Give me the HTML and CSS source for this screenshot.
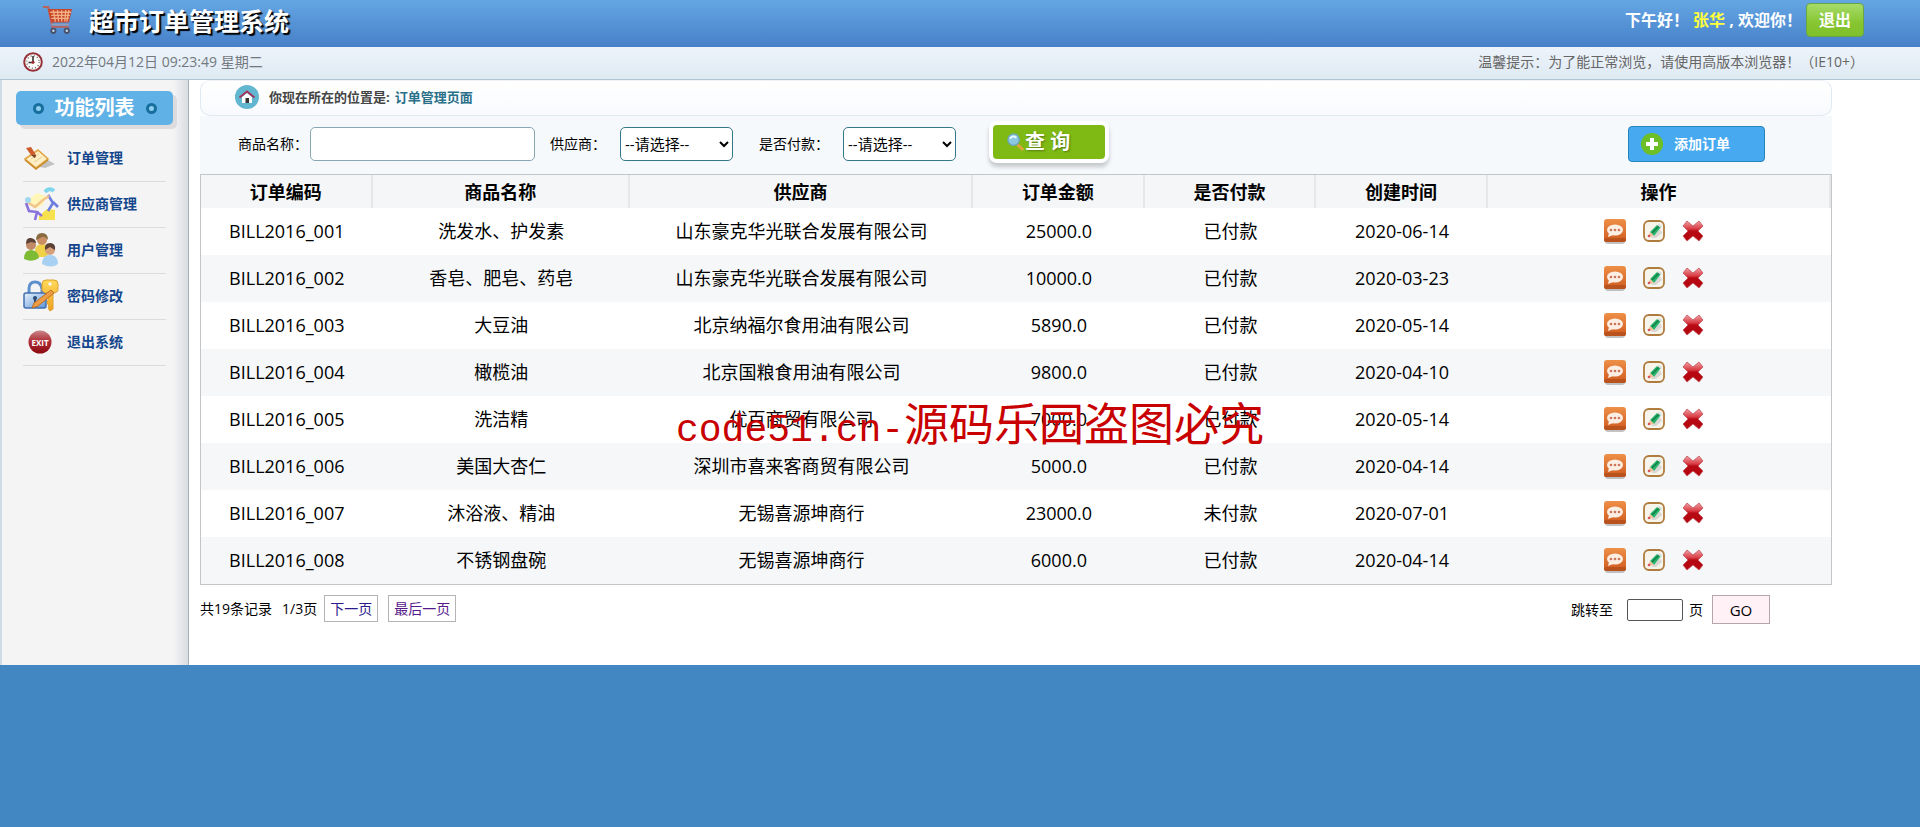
FILE: index.html
```html
<!DOCTYPE html>
<html lang="zh-CN">
<head>
<meta charset="utf-8">
<title>超市订单管理系统</title>
<link rel="stylesheet" href="styles.css">
</head>
<body>
<svg class="defs" aria-hidden="true">
  <defs>
    <linearGradient id="g-orange" x1="0" y1="0" x2="0" y2="1"><stop offset="0" stop-color="#ee9048"/><stop offset="1" stop-color="#cf5a1e"/></linearGradient>
    <linearGradient id="g-red" x1="0" y1="0" x2="0" y2="1"><stop offset="0" stop-color="#f0a0a4"/><stop offset=".4" stop-color="#d83a42"/><stop offset=".5" stop-color="#b80a14"/><stop offset="1" stop-color="#b4050e"/></linearGradient>
    <linearGradient id="g-exit" x1="0" y1="0" x2="0" y2="1"><stop offset="0" stop-color="#c98888"/><stop offset=".45" stop-color="#b03038"/><stop offset="1" stop-color="#8c0a12"/></linearGradient>
    <linearGradient id="g-lock" x1="0" y1="0" x2="1" y2="1"><stop offset="0" stop-color="#eaf3fc"/><stop offset="1" stop-color="#5b93d6"/></linearGradient>
    <linearGradient id="g-gold" x1="0" y1="0" x2="0" y2="1"><stop offset="0" stop-color="#ffd95a"/><stop offset="1" stop-color="#efa11e"/></linearGradient>
    <symbol id="view" viewBox="0 0 22 25">
      <rect x="1" y="4" width="20" height="21" rx="3" fill="#999" opacity=".6"/>
      <rect y="0" width="22" height="23" rx="3" fill="url(#g-orange)"/>
      <rect y="19" width="22" height="4" rx="2" fill="#b9521d"/>
      <ellipse cx="11" cy="11" rx="8" ry="5.5" fill="#fdeee4"/><path d="M5 14l-1 4 5-2z" fill="#fdeee4"/>
      <circle cx="7" cy="11" r="1.3" fill="#c9765a"/><circle cx="11" cy="11" r="1.3" fill="#c9765a"/><circle cx="15" cy="11" r="1.3" fill="#c9765a"/>
    </symbol>
    <symbol id="edit" viewBox="0 0 22 22">
      <rect x="1" y="1" width="20" height="20" rx="5" fill="#f7f4ec" stroke="#b07c3e" stroke-width="1.8"/>
      <path d="M8 18l9-9 2 4-6 5z" fill="#ccc" opacity=".7"/>
      <path d="M7 12l7-7 4 2-7 9z" fill="#27b36a"/><path d="M9 13l7-7" stroke="#127a44" stroke-width="1.3"/>
      <path d="M14 5l2-1 3 2-1 2z" fill="#d8dedb"/><path d="M7 12l-2 5 6-1z" fill="#f1bd97"/><circle cx="6" cy="16" r="1.3" fill="#d8525a"/>
    </symbol>
    <symbol id="remove" viewBox="0 0 22 22">
      <path d="M5 1l6 5 6-5 4 5-5 5 5 5-4 5-6-5-6 5-4-5 5-5-5-5z" fill="url(#g-red)" stroke="#c2525a" stroke-width=".8" stroke-linejoin="round"/>
    </symbol>
  </defs>
</svg>

<header class="top">
  <div class="brand">
    <svg class="cart" viewBox="0 0 28 28" aria-hidden="true">
      <path d="M0 1h5l4 19h16" fill="none" stroke="#b8625c" stroke-width="2"/>
      <path d="M5 3h23l-3 13H8z" fill="#c8462c"/>
      <path d="M7 6h20M8 9h18M8 12h17M10 4l2 11M14 4l1 11M18 4v11M22 4l-1 11M25 4l-2 11" stroke="#f3b183" stroke-width="1.3"/>
      <path d="M8 18h17" stroke="#8d9fc0" stroke-width="2"/>
      <circle cx="10" cy="24" r="3" fill="#46516a"/><circle cx="23" cy="24" r="3" fill="#46516a"/>
      <circle cx="10" cy="24" r="1.2" fill="#c6d2e4"/><circle cx="23" cy="24" r="1.2" fill="#c6d2e4"/>
    </svg>
    <h1>超市订单管理系统</h1>
  </div>
  <div class="user">
    <p>下午好！ <span class="name">张华</span> , 欢迎你！</p>
    <a class="logout" href="#">退出</a>
  </div>
</header>

<section class="infobar">
  <div class="clock">
    <svg viewBox="0 0 20 20" aria-hidden="true"><circle cx="10" cy="10" r="8.8" fill="#fdfbf8" stroke="#98323a" stroke-width="2"/><circle cx="10" cy="10" r="6.2" fill="none" stroke="#666" stroke-width="1.4" stroke-dasharray="1 2.25"/><path d="M10 4v6.5H5.5" fill="none" stroke="#333" stroke-width="1.6"/><circle cx="10" cy="10.3" r="1.5" fill="#a5262e"/></svg>
    <time>2022年04月12日 09:23:49 星期二</time>
  </div>
  <p class="tip">温馨提示：为了能正常浏览，请使用高版本浏览器！（IE10+）</p>
</section>

<div class="page">
  <aside class="side">
    <h2><i></i>功能列表<i></i></h2>
    <nav>
      <a href="#"><svg viewBox="0 0 36 36" aria-hidden="true"><path d="M12 26l10 2 10-4-9-5z" fill="#999" opacity=".55"/><path d="M2 19l13-9 10 9-12 9z" fill="#fdeec4" stroke="#e0a545" stroke-width="1.6"/><path d="M2 20l11 9 12-9" fill="none" stroke="#c98b2e" stroke-width="1.4"/><path d="M8 19l8-5M11 22l8-5" stroke="#e8cf98"/><path d="M3 8l5-1 5 8-1 3-4-3z" fill="#cf5a2c"/><path d="M8 15l4 3 1-3z" fill="#6a4a30"/></svg>订单管理</a>
      <a href="#"><svg viewBox="0 0 36 36" aria-hidden="true"><path d="M5 14l9-7 9 3-3 9-8 4z" fill="#fff6b8"/><path d="M16 30l8-7 8 1v10H16z" fill="#f7e24e"/><path d="M22 6q4-5 9-1" fill="none" stroke="#7fd6ec" stroke-width="4"/><path d="M25 9l5 8-5 8M30 16l5 5" fill="none" stroke="#6c7ee0" stroke-width="2.6"/><path d="M4 16l8 5 8-7 6-4" fill="none" stroke="#f3c58c" stroke-width="2.6"/><path d="M3 17l3 8 8 1-2 8M14 26l5 4" fill="none" stroke="#8a74dc" stroke-width="2.6"/><circle cx="5" cy="14" r="3" fill="#a3d9ee"/></svg>供应商管理</a>
      <a href="#"><svg viewBox="0 0 36 36" aria-hidden="true"><path d="M12 20q0-8 7-8t8 8l-4 5h-8z" fill="#f0d24a"/><circle cx="19" cy="8" r="5" fill="#c98f63"/><path d="M13 8q0-7 6-7t6 7q-3-4-6-3z" fill="#8a6a40"/><path d="M1 27q0-9 7-9t8 8q-7 5-15 1z" fill="#7dbb35"/><circle cx="8" cy="13" r="5" fill="#c08a66"/><path d="M3 12q0-7 5-6t5 5l-5-1z" fill="#5a4236"/><path d="M19 32q0-9 8-9t8 9q-7 5-16 0z" fill="#a8d0f2"/><circle cx="27" cy="18" r="5" fill="#d6a07a"/><path d="M22 18q-1-7 5-7t5 7l-5-3z" fill="#5b4033"/></svg>用户管理</a>
      <a href="#"><svg viewBox="0 0 36 36" aria-hidden="true"><path d="M6 16v-5q0-7 6-7t7 7v5" fill="none" stroke="#5d8fcc" stroke-width="3"/><rect x="1" y="15" width="22" height="15" rx="2" fill="url(#g-lock)" stroke="#3f6fae" stroke-width="1.5"/><circle cx="12" cy="20" r="2" fill="#2a4a78"/><path d="M12 20v6" stroke="#2a4a78" stroke-width="2"/><path d="M23 2h8q4 0 4 4v5q0 4-5 4v16l-3 2-2-3 1-2-2-3 1-3V15q-6 0-6-4V6q0-4 4-4z" fill="url(#g-gold)" stroke="#dfa030"/><circle cx="27" cy="6" r="1.8" fill="#f4f4f4"/><path d="M9 30l2-5 17-13 3 3-16 13z" fill="#ec9d45" stroke="#bc7026"/></svg>密码修改</a>
      <a href="#"><svg viewBox="0 0 36 36" aria-hidden="true"><circle cx="17" cy="18" r="11.5" fill="url(#g-exit)"/><text class="exit" x="17" y="22" text-anchor="middle">EXIT</text></svg>退出系统</a>
    </nav>
  </aside>

  <main class="main">
    <div class="crumb">
      <svg viewBox="0 0 24 24" aria-hidden="true"><circle cx="12" cy="12" r="12" fill="#62b6cf"/><path d="M7 12l5-4 5 4v6H7z" fill="#fff"/><path d="M4.500 12.500L12 6.500l7.500 6" fill="none" stroke="#a5345c" stroke-width="2"/><rect x="10.500" y="13" width="3.500" height="5" fill="#333"/></svg>
      <strong>你现在所在的位置是:</strong>
      <span>订单管理页面</span>
    </div>

    <form class="search">
      <label for="product">商品名称：</label>
      <input id="product" type="text">
      <label for="supplier">供应商：</label>
      <select id="supplier"><option>--请选择--</option></select>
      <label for="paid">是否付款：</label>
      <select id="paid"><option>--请选择--</option></select>
      <button class="query" type="button">
        <svg viewBox="0 0 20 20" aria-hidden="true"><path d="M12 12l6 6" stroke="#e2a33a" stroke-width="3"/><circle cx="8" cy="7" r="6" fill="#8cc9e0" stroke="#6aa5b8" stroke-width="1.4"/><path d="M4 6q3-4 7-1" stroke="#e6f8ff" stroke-width="2" fill="none"/></svg>查 询</button>
      <a class="add" href="#">
        <svg viewBox="0 0 22 22" aria-hidden="true"><circle cx="11" cy="11" r="11" fill="#6cbf27"/><path d="M11 5v12M5 11h12" stroke="#fff" stroke-width="4"/></svg>添加订单</a>
    </form>

    <table class="orders">
      <colgroup><col class="c2"><col class="c3"><col class="c4"><col class="c2"><col class="c2"><col class="c2"><col class="c4"></colgroup>
      <thead><tr><th>订单编码</th><th>商品名称</th><th>供应商</th><th>订单金额</th><th>是否付款</th><th>创建时间</th><th>操作</th></tr></thead>
      <tbody>
        <tr><td>BILL2016_001</td><td>洗发水、护发素</td><td>山东豪克华光联合发展有限公司</td><td>25000.0</td><td>已付款</td><td>2020-06-14</td><td><div class="ops"><a href="#" aria-label="查看"><svg class="v"><use href="#view"/></svg></a><a href="#" aria-label="修改"><svg><use href="#edit"/></svg></a><a href="#" aria-label="删除"><svg><use href="#remove"/></svg></a></div></td></tr>
        <tr><td>BILL2016_002</td><td>香皂、肥皂、药皂</td><td>山东豪克华光联合发展有限公司</td><td>10000.0</td><td>已付款</td><td>2020-03-23</td><td><div class="ops"><a href="#" aria-label="查看"><svg class="v"><use href="#view"/></svg></a><a href="#" aria-label="修改"><svg><use href="#edit"/></svg></a><a href="#" aria-label="删除"><svg><use href="#remove"/></svg></a></div></td></tr>
        <tr><td>BILL2016_003</td><td>大豆油</td><td>北京纳福尔食用油有限公司</td><td>5890.0</td><td>已付款</td><td>2020-05-14</td><td><div class="ops"><a href="#" aria-label="查看"><svg class="v"><use href="#view"/></svg></a><a href="#" aria-label="修改"><svg><use href="#edit"/></svg></a><a href="#" aria-label="删除"><svg><use href="#remove"/></svg></a></div></td></tr>
        <tr><td>BILL2016_004</td><td>橄榄油</td><td>北京国粮食用油有限公司</td><td>9800.0</td><td>已付款</td><td>2020-04-10</td><td><div class="ops"><a href="#" aria-label="查看"><svg class="v"><use href="#view"/></svg></a><a href="#" aria-label="修改"><svg><use href="#edit"/></svg></a><a href="#" aria-label="删除"><svg><use href="#remove"/></svg></a></div></td></tr>
        <tr><td>BILL2016_005</td><td>洗洁精</td><td>优百商贸有限公司</td><td>7000.0</td><td>已付款</td><td>2020-05-14</td><td><div class="ops"><a href="#" aria-label="查看"><svg class="v"><use href="#view"/></svg></a><a href="#" aria-label="修改"><svg><use href="#edit"/></svg></a><a href="#" aria-label="删除"><svg><use href="#remove"/></svg></a></div></td></tr>
        <tr><td>BILL2016_006</td><td>美国大杏仁</td><td>深圳市喜来客商贸有限公司</td><td>5000.0</td><td>已付款</td><td>2020-04-14</td><td><div class="ops"><a href="#" aria-label="查看"><svg class="v"><use href="#view"/></svg></a><a href="#" aria-label="修改"><svg><use href="#edit"/></svg></a><a href="#" aria-label="删除"><svg><use href="#remove"/></svg></a></div></td></tr>
        <tr><td>BILL2016_007</td><td>沐浴液、精油</td><td>无锡喜源坤商行</td><td>23000.0</td><td>未付款</td><td>2020-07-01</td><td><div class="ops"><a href="#" aria-label="查看"><svg class="v"><use href="#view"/></svg></a><a href="#" aria-label="修改"><svg><use href="#edit"/></svg></a><a href="#" aria-label="删除"><svg><use href="#remove"/></svg></a></div></td></tr>
        <tr><td>BILL2016_008</td><td>不锈钢盘碗</td><td>无锡喜源坤商行</td><td>6000.0</td><td>已付款</td><td>2020-04-14</td><td><div class="ops"><a href="#" aria-label="查看"><svg class="v"><use href="#view"/></svg></a><a href="#" aria-label="修改"><svg><use href="#edit"/></svg></a><a href="#" aria-label="删除"><svg><use href="#remove"/></svg></a></div></td></tr>
      </tbody>
    </table>

    <div class="pager">
      <div class="pages">
        <span class="total">共19条记录</span><span>1/3页</span>
        <a class="next" href="#">下一页</a><a class="last" href="#">最后一页</a>
      </div>
      <form class="jump">
        <label for="page-no">跳转至</label>
        <input id="page-no" type="text">
        <span>页</span>
        <button type="button">GO</button>
      </form>
    </div>
  </main>
</div>
<div class="watermark"><span>code51.cn-</span>源码乐园盗图必究</div>
</body>
</html>
```

FILE: styles.css
```css
* { box-sizing: border-box; }
body {
  margin: 0;
  background: #4286c2;
  color: #000;
  font: 14px/20px "Open Sans", "Noto Sans CJK SC", sans-serif;
}
h1, h2, p { margin: 0; }
a { text-decoration: none; color: inherit; }
svg { display: block; flex: none; }
input, select, button { font: inherit; color: inherit; margin: 0; }
.defs { position: absolute; width: 0; height: 0; }

.top {
  display: flex;
  justify-content: space-between;
  height: 47px;
  padding: 0 56px 0 43px;
  background: linear-gradient(#64a6e4, #4780c8);
}
.brand { display: flex; gap: 17px; padding-top: 6px; }
.cart { width: 29px; height: 29px; }
.brand h1 {
  font-size: 25px;
  line-height: 30px;
  color: #fff;
  text-shadow: 2px 2px 1px #000;
}
.user {
  display: flex;
  align-items: flex-start;
  gap: 4px;
  padding-top: 3px;
  color: #fff;
  font-size: 16px;
  font-weight: bold;
  line-height: 34px;
}
.user .name { color: #ffff3c; }
.logout {
  padding: 0 12px;
  border: 1px solid #6aa544;
  border-radius: 4px;
  background: linear-gradient(#a5db6a, #86c530 60%, #7fc02c);
  line-height: 32px;
}

.infobar {
  display: flex;
  justify-content: space-between;
  align-items: center;
  height: 33px;
  padding: 0 56px 2px 23px;
  border-bottom: 1px solid #b2c5d3;
  background: linear-gradient(#edf3fa, #dfeaf3);
  color: #72787e;
}
.clock { display: flex; align-items: center; gap: 9px; }
.clock svg { width: 20px; height: 20px; }
.tip { color: #666; }

.page { display: flex; min-height: 585px; background: #fff; }
.side {
  width: 189px;
  flex: none;
  padding: 11px 15px 0;
  border-left: 2px solid #cfdbe6;
  border-right: 1px solid #a5b1bb;
  background: linear-gradient(to right, #f4f4f5 92%, #d9dde1);
}
.side h2 {
  display: flex;
  align-items: center;
  justify-content: center;
  gap: 11px;
  height: 34px;
  margin-left: -1px;
  border-radius: 5px;
  background: #60b2e6;
  box-shadow: 4px 4px 0 #dcdcdf;
  color: #fff;
  font-size: 20px;
}
.side h2 i {
  width: 11px;
  height: 11px;
  border: 3px solid #176f9e;
  border-radius: 50%;
  background: #8fd0f2;
}
.side nav { padding: 11px 7px 0 6px; }
.side nav a {
  display: flex;
  align-items: center;
  gap: 8px;
  height: 46px;
  padding-bottom: 1px;
  border-bottom: 1px solid #dcdcdc;
  color: #14468c;
  font-weight: bold;
}
.side nav svg { width: 36px; height: 36px; }
.exit { fill: #fff; font: bold 8px "Open Sans", sans-serif; }

.main { width: 85%; margin-left: 11px; }
.crumb {
  display: flex;
  align-items: center;
  gap: 5px;
  height: 36px;
  padding: 0 0 2px 34px;
  border: 1px solid #e0e8f0;
  border-top-color: #eef2f6;
  border-radius: 10px;
  background: linear-gradient(#fff, #f8fafd);
  font-size: 13px;
}
.crumb svg { width: 24px; height: 24px; margin-right: 5px; }
.crumb strong { color: #444; }
.crumb span { color: #2a6f88; font-weight: bold; }

.search {
  display: flex;
  align-items: center;
  height: 58px;
  padding: 0 67px 2px 38px;
  background: #f6f9fc;
}
.search label { white-space: nowrap; }
.search input {
  width: 225px;
  height: 34px;
  margin: 0 15px 0 2px;
  border: 1px solid #88a6b4;
  border-radius: 5px;
  background: #fff;
}
.search select {
  width: 113px;
  height: 34px;
  margin: 0 26px 0 14px;
  border: 1px solid #34788c;
  border-radius: 5px;
  background: #fff;
  font-size: 15px;
}
.query {
  display: flex;
  align-items: center;
  width: 120px;
  height: 42px;
  margin: 0 0 4px 7px;
  padding: 0 0 0 13px;
  border: 4px solid #fff;
  border-radius: 8px;
  background: #7fba14;
  box-shadow: 0 4px 4px #c4c8cb;
  color: #fff;
  font-size: 20px;
  font-weight: bold;
  text-shadow: 1px 1px 2px #567c10;
}
.query svg { width: 19px; height: 19px; }
.add {
  display: flex;
  align-items: center;
  gap: 11px;
  width: 137px;
  height: 36px;
  margin-left: auto;
  padding-left: 12px;
  border: 1px solid #2585b8;
  border-radius: 4px;
  background: #47a9f0;
  color: #fff;
  font-weight: bold;
}
.add svg { width: 22px; height: 22px; }

.orders {
  width: 100%;
  table-layout: fixed;
  border-collapse: separate;
  border-spacing: 0;
  border: 1px solid #c3c5c7;
  font-size: 18px;
  text-align: center;
}
.c2 { width: 10%; }
.c3 { width: 15%; }
.c4 { width: 20%; }
.orders th, .orders td { padding: 0; line-height: 24px; }
.orders th { height: 33px; background: #f5f6f8; border-right: 2px solid #e6e7e9; }
.orders td { height: 47px; padding-bottom: 1px; }
.orders tr:nth-child(even) td { background: #f5f7f9; }
.ops {
  display: flex;
  justify-content: center;
  align-items: center;
  gap: 17px;
  padding-right: 10px;
}
.ops svg { width: 22px; height: 22px; }
.ops .v { height: 25px; }

.pager {
  display: flex;
  justify-content: space-between;
  align-items: flex-start;
  padding: 10px 62px 0 0;
}
.pages, .jump { display: flex; align-items: center; }
.pages { line-height: 25px; }
.total { margin-right: 10px; }
.next, .last { padding: 0 5px; border: 1px solid #b4b4b4; }
.next { margin: 0 10px 0 7px; color: #2a1a8c; }
.last { color: #551a8b; }
.jump input {
  width: 56px;
  height: 22px;
  margin: 0 6px 0 14px;
  border: 1px solid #555;
  border-radius: 2px;
  background: #fff;
}
.jump button {
  width: 58px;
  height: 29px;
  margin-left: 9px;
  padding: 0;
  border: 1px solid #b5a5ac;
  background: #fff1f6;
  font-size: 15px;
}

.watermark {
  position: absolute;
  top: 395px;
  left: 676px;
  color: #c80000;
  font: 45px/54px "Noto Sans CJK SC", sans-serif;
  white-space: nowrap;
  pointer-events: none;
}
.watermark span { font: 38px/54px "Liberation Mono", monospace; }
```
